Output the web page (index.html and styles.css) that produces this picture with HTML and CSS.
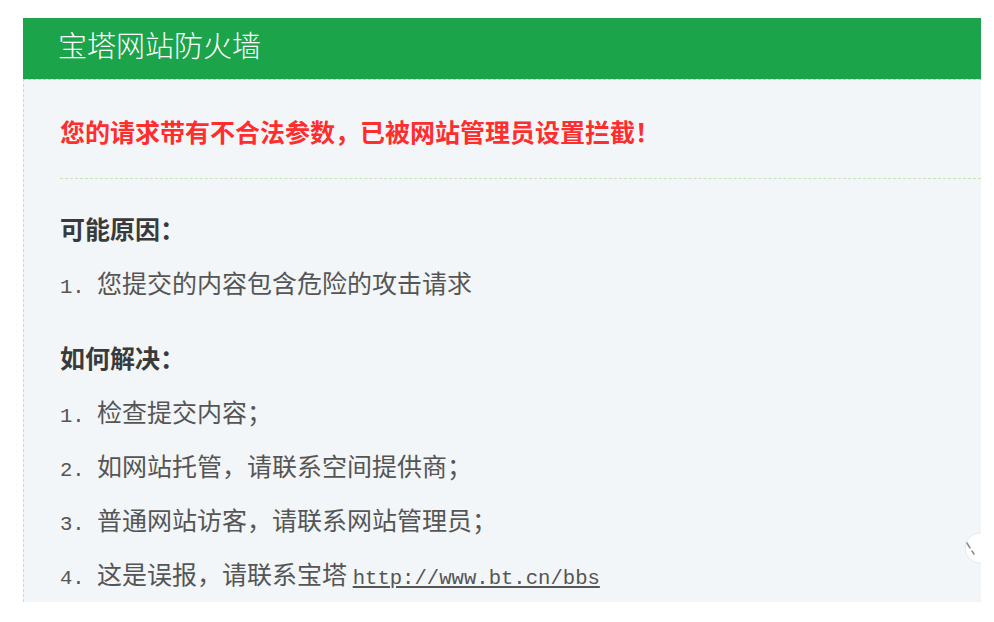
FILE: index.html
```html
<!DOCTYPE html>
<html lang="zh-CN">

<head>
    <meta charset="UTF-8">
    <meta name="viewport" content="width=device-width, initial-scale=1.0">
    <link rel="stylesheet" href="styles.css">
    <title>宝塔网站防火墙</title>
</head>

<body>
    <div class="main">
        <div class="title">宝塔网站防火墙</div>
        <div class="content">
            <p class="t1">您的请求带有不合法参数，已被网站管理员设置拦截！</p>
            <div class="line"></div>
            <p class="t2">可能原因：</p>
            <ul>
                <li><span class="mono">1. </span>您提交的内容包含危险的攻击请求</li>
            </ul>
            <p class="t2 second">如何解决：</p>
            <ul>
                <li><span class="mono">1. </span>检查提交内容；</li>
                <li><span class="mono">2. </span>如网站托管，请联系空间提供商；</li>
                <li><span class="mono">3. </span>普通网站访客，请联系网站管理员；</li>
                <li><span class="mono">4. </span>这是误报，请联系宝塔 <a class="mono" href="#">http://www.bt.cn/bbs</a></li>
            </ul>
        </div>
        <!-- 右侧悬浮的小按钮，只露出一点 -->
        <div class="float">
            <svg width="18" height="34" viewBox="0 0 18 34">
                <circle cx="17" cy="17" r="15" fill="#fff" stroke="#e6eaec" stroke-width="1" />
                <path d="M4 12 L7 17" stroke="#8a8f93" stroke-width="1.6" stroke-linecap="round" />
                <path d="M9 20 L11 23" stroke="#8a8f93" stroke-width="1.6" stroke-linecap="round" />
            </svg>
        </div>
    </div>
</body>

</html>
```

FILE: styles.css
```css
* {
    margin: 0;
    padding: 0;
}

body {
    background-color: #fff;
    font-family: "Noto Sans CJK SC", "Liberation Sans", sans-serif;
}

ul,
li {
    list-style: none;
}

.main {
    width: 958px;
    margin: 18px 0 0 23px;
    background-color: #f3f6f8;
    position: relative;
}

.title {
    height: 61px;
    line-height: 52px;
    padding-left: 35px;
    background-color: #1ba44a;
    color: #fff;
    font-size: 29px;
    font-weight: 300;
}

.content {
    border-top: 1px dashed #b9d9a8;
    border-left: 1px dashed #c9e0bd;
    padding: 33px 0 11px 36px;
}

p,
li {
    height: 36px;
    line-height: 36px;
    font-size: 25px;
}

.t1 {
    color: #ff2d2d;
    font-weight: bold;
}

.line {
    margin-top: 29px;
    border-top: 1px dashed #c9e2b6;
}

.t2 {
    margin-top: 31px;
    color: #3a3a3a;
    font-weight: bold;
}

.t2.second {
    margin-top: 39px;
}

li {
    margin-top: 18px;
    color: #555;
}

.mono {
    font-family: "Liberation Mono", monospace;
    font-size: 20.6px;
    line-height: 20px;
    white-space: pre;
}

a {
    color: #555;
    text-decoration: underline;
}

.float {
    position: absolute;
    right: 0;
    top: 513px;
    line-height: 0;
}
```
